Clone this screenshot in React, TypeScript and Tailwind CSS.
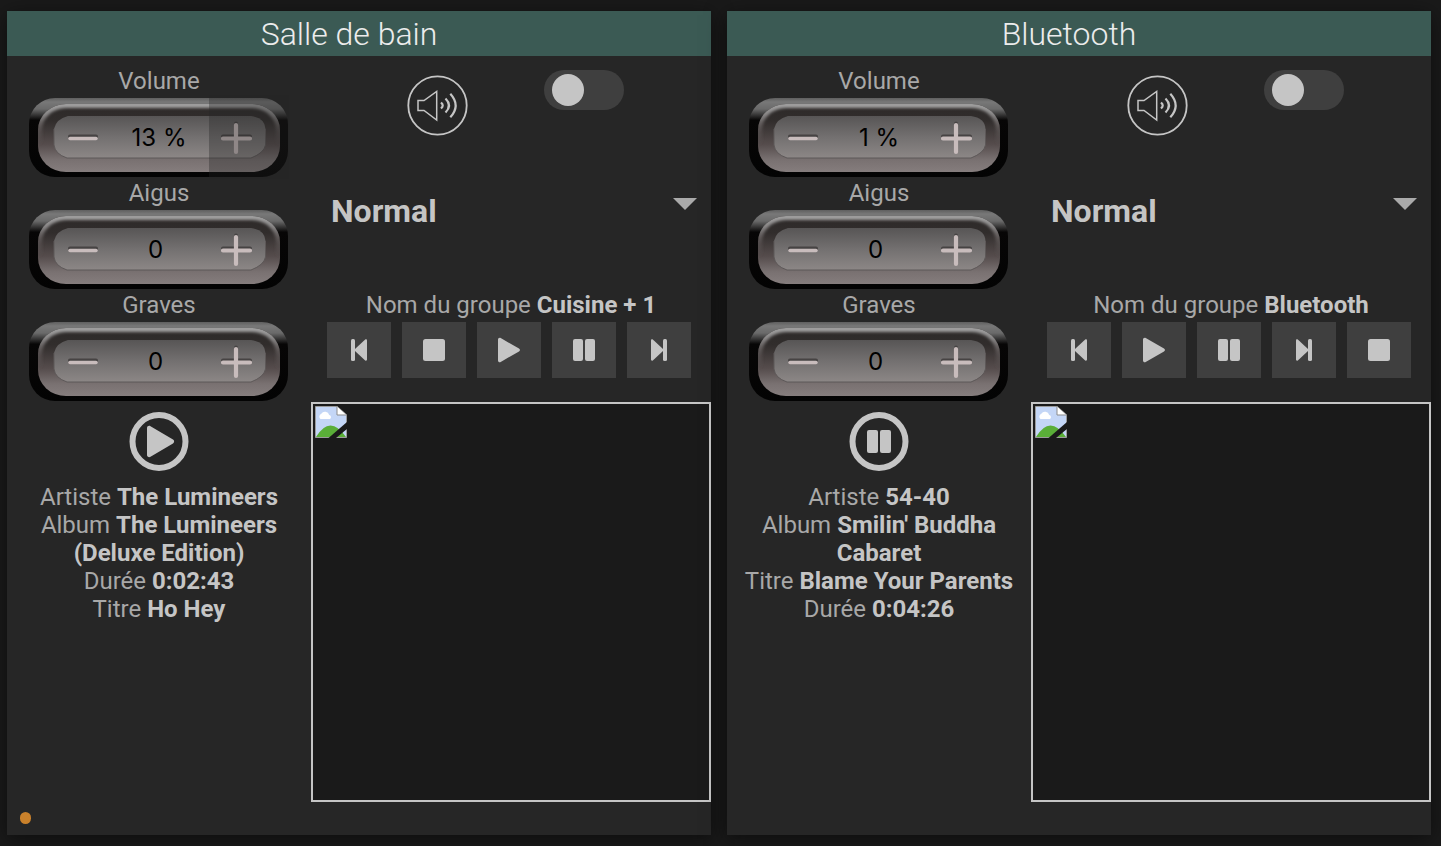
import { useState } from 'react';

type Status = 'play' | 'pause';
type Action = 'previous' | 'stop' | 'play' | 'pause' | 'next';

interface Info {
  label: string;
  value: string;
}

interface Room {
  id: string;
  name: string;
  volume: number;
  volumeLimit?: boolean;
  group: string;
  status: Status;
  actions: Action[];
  infos: Info[];
  pending?: boolean;
}

const ROOMS: Room[] = [
  {
    id: 'bath',
    name: 'Salle de bain',
    volume: 13,
    volumeLimit: true,
    group: 'Cuisine + 1',
    status: 'play',
    actions: ['previous', 'stop', 'play', 'pause', 'next'],
    infos: [
      { label: 'Artiste', value: 'The Lumineers' },
      { label: 'Album', value: 'The Lumineers (Deluxe Edition)' },
      { label: 'Durée', value: '0:02:43' },
      { label: 'Titre', value: 'Ho Hey' },
    ],
    pending: true,
  },
  {
    id: 'bluetooth',
    name: 'Bluetooth',
    volume: 1,
    group: 'Bluetooth',
    status: 'pause',
    actions: ['previous', 'play', 'pause', 'next', 'stop'],
    infos: [
      { label: 'Artiste', value: '54-40' },
      { label: 'Album', value: "Smilin' Buddha Cabaret" },
      { label: 'Titre', value: 'Blame Your Parents' },
      { label: 'Durée', value: '0:04:26' },
    ],
  },
];

const ACTION_ICON = {
  previous: (
    <>
      <rect x="24" y="17" width="4" height="22" rx="1.5" />
      <path d="M38.2 17.6 28 27v2l10.2 9.4c.8.7 1.8.3 1.8-.8V18.4c0-1.1-1-1.500-1.8-.8Z" />
    </>
  ),
  stop: <rect x="21" y="17" width="22" height="22" rx="2.5" />,
  play: (
    <path d="M21 17.6c0-1.4 1.5-2.2 2.7-1.5L42 26.5c1.3.7 1.3 2.3 0 3L23.7 39.9c-1.2.7-2.7-.1-2.7-1.5Z" />
  ),
  pause: (
    <>
      <rect x="21" y="17" width="10" height="22" rx="2" />
      <rect x="33" y="17" width="10" height="22" rx="2" />
    </>
  ),
  next: (
    <>
      <rect x="36" y="17" width="4" height="22" rx="1.5" />
      <path d="M25.8 17.6 36 27v2l-10.2 9.4c-.8.7-1.8.3-1.8-.8V18.4c0-1.1 1-1.5 1.8-.8Z" />
    </>
  ),
};

function StepperFrame({ id }: { id: string }) {
  return (
    <svg viewBox="0 0 260 84" className="absolute inset-0 h-full w-full" aria-hidden="true">
      <defs>
        <linearGradient id={`${id}-rim`} x1="0" y1="0" x2="0" y2="1">
          <stop offset="0" stopColor="#5f5f5f" />
          <stop offset="0.05" stopColor="#787878" />
          <stop offset="0.14" stopColor="#6a6a6a" />
          <stop offset="0.28" stopColor="#070606" />
          <stop offset="1" stopColor="#030303" />
        </linearGradient>
        <linearGradient id={`${id}-bevel`} x1="0" y1="0" x2="0" y2="1">
          <stop offset="0" stopColor="#2d2a29" />
          <stop offset="0.25" stopColor="#312d2c" />
          <stop offset="0.6" stopColor="#564d4d" />
          <stop offset="0.82" stopColor="#797171" />
          <stop offset="1" stopColor="#857d7d" />
        </linearGradient>
        <linearGradient id={`${id}-shine`} gradientUnits="userSpaceOnUse" x1="0" y1="9" x2="0" y2="77">
          <stop offset="0" stopColor="#a3a3a3" />
          <stop offset="0.15" stopColor="#8c8a8a" />
          <stop offset="0.4" stopColor="#6b6363" stopOpacity="0.4" />
          <stop offset="0.6" stopColor="#6b6363" stopOpacity="0" />
        </linearGradient>
        <linearGradient id={`${id}-plate`} x1="0" y1="0" x2="0" y2="1">
          <stop offset="0" stopColor="#575555" />
          <stop offset="0.5" stopColor="#737070" />
          <stop offset="1" stopColor="#8c8786" />
        </linearGradient>
        <filter id={`${id}-soft`} x="-5%" y="-10%" width="110%" height="120%">
          <feGaussianBlur stdDeviation="1.6" />
        </filter>
        <clipPath id={`${id}-clip`}>
          <rect x="9" y="9" width="242" height="68" rx="28" ry="26" />
        </clipPath>
      </defs>
      <rect x="0" y="3" width="259" height="79" rx="26" fill={`url(#${id}-rim)`} />
      <rect x="9" y="9" width="242" height="68" rx="28" ry="26" fill={`url(#${id}-bevel)`} />
      <g clipPath={`url(#${id}-clip)`}>
        <rect
          x="10"
          y="10"
          width="240"
          height="66"
          rx="27"
          ry="25"
          fill="none"
          stroke={`url(#${id}-shine)`}
          strokeWidth="6"
          filter={`url(#${id}-soft)`}
        />
      </g>
      <path
        d="M39 21H222Q236 23 236.5 34V50Q235 58 222 63H38Q26 59 25 50V34Q27 24 39 21Z"
        fill={`url(#${id}-plate)`}
      />
      <path
        d="M236.5 34V50Q235 58 222 63H38Q26 59 25 50V34"
        fill="none"
        stroke="#5d5858"
        strokeWidth="1"
      />
      <g fill="none" strokeLinecap="round">
        <path d="M41 41.5h26M194 41.500h27M207 28.500v7" stroke="#464343" strokeWidth="4" />
        <path d="M41 43.500h26" stroke="#c8bcbc" strokeWidth="3.500" />
        <path d="M194 43.500h27M207 30v27" stroke="#c8bcbc" strokeWidth="4.200" />
      </g>
    </svg>
  );
}

interface StepperProps {
  id: string;
  label: string;
  initial: number;
  unit?: string;
  limited?: boolean;
}

function Stepper({ id, label, initial, unit = '', limited }: StepperProps) {
  const [value, setValue] = useState(initial);

  return (
    <div role="group" aria-labelledby={id} className="flex w-full flex-col items-center">
      <span id={id}>{label}</span>
      <div className="relative flex h-[84px] w-[260px]">
        <StepperFrame id={`${id}-frame`} />
        <button
          type="button"
          aria-label={`${label} moins`}
          className="relative w-20"
          onClick={() => setValue(value - 1)}
        />
        <output className="relative flex-1 self-center pt-0.5 text-center font-['Inter',sans-serif] whitespace-pre text-black">
          {`${value} ${unit}`}
        </output>
        <button
          type="button"
          aria-label={`${label} plus`}
          className="relative w-20"
          onClick={() => setValue(value + 1)}
        />
        {limited && (
          <div className="pointer-events-none absolute inset-y-0 right-0 w-20 bg-[#262626]/35" />
        )}
      </div>
    </div>
  );
}

function StatusIcon({ status }: { status: Status }) {
  return (
    <svg viewBox="0 0 60 60" className="h-[60px] w-[60px] fill-[#c5c5c5]" aria-hidden="true">
      <circle cx="30" cy="30.5" r="26.5" fill="none" stroke="#c5c5c5" strokeWidth="6" />
      {status === 'play' ? (
        <path d="M18 17c0-1.8 2-2.7 3.5-1.8L44 28.6c1.5.9 1.5 2.9 0 3.8L21.5 45.8c-1.5.9-3.5 0-3.5-1.8Z" />
      ) : (
        <>
          <rect x="18" y="19" width="11" height="23" rx="2" />
          <rect x="31" y="19" width="11" height="23" rx="2" />
        </>
      )}
    </svg>
  );
}

function SpeakerIcon() {
  return (
    <svg
      viewBox="-31 -31 62 62"
      className="h-full w-full fill-none stroke-[#c5c5c5]"
      strokeWidth="1.8"
      aria-hidden="true"
    >
      <circle cx="-0.5" cy="-0.500" r="29.200" />
      <path d="M-20-5.500h6L-1.300-14.600v28.600L-14 4.500h-6Z" strokeWidth="1.500" />
      <path
        d="M3-3.500Q6.500-.5 3 2.500M7.500-7.500Q14.500-.5 7.500 6.500M12.300-12.300Q23-.5 12.300 11.300"
        strokeWidth="2.200"
      />
    </svg>
  );
}

function BrokenImage() {
  return (
    <svg viewBox="0 0 32 32" className="h-8 w-8" aria-hidden="true">
      <path d="M.5.5H22L31.500 9v22.500H.5Z" fill="#c4d6f6" stroke="#9b9b9b" />
      <path d="M5.500 13a3 3 0 0 1 .8-5.200A4.300 4.300 0 0 1 14.200 9a2.200 2.200 0 0 1 .8 4Z" fill="#fff" />
      <path d="M1 31Q8 19.500 15.500 19.500T31 31Z" fill="#5aae38" />
      <path d="M22 0v9h10Z" fill="#fff" stroke="#8b8b8b" />
      <path d="M22.600 0H32v8.500Z" fill="#1a1a1a" />
      <path d="M13.500 32 32 16v7L21 32Z" fill="#1a1a1a" />
    </svg>
  );
}

function PlayerTile({ room }: { room: Room }) {
  return (
    <section className="flex flex-col bg-[#262626] shadow-[0_4px_20px_rgba(0,0,0,0.5)]">
      <h2 className="h-[45px] bg-[#3b5a54] pr-5 text-center text-[32px]/[47px] font-light text-[#ececec]">
        {room.name}
      </h2>
      <div className="grid flex-1 grid-cols-[19fr_25fr]">
        <div className="flex flex-col items-center pt-[11px] text-center">
          <Stepper
            id={`${room.id}-volume`}
            label="Volume"
            initial={room.volume}
            unit="%"
            limited={room.volumeLimit}
          />
          <Stepper id={`${room.id}-treble`} label="Aigus" initial={0} />
          <Stepper id={`${room.id}-bass`} label="Graves" initial={0} />
          <div className="py-2">
            <StatusIcon status={room.status} />
          </div>
          <div className="w-full px-3 pt-1">
            {room.infos.map(({ label, value }) => (
              <p key={label}>
                {label} <strong className="font-bold text-[#c5c5c5]">{value}</strong>
              </p>
            ))}
          </div>
          {room.pending && (
            <span className="mt-auto mb-[11px] ml-[13px] h-3 w-[11px] self-start rounded-full bg-[#c9812b]" />
          )}
        </div>

        <div className="pb-[33px]">
          <div className="flex h-[127px] gap-[75px] pt-[14px] pl-24">
            <button type="button" aria-label="Muet" className="mt-[5px] h-[62px] w-[62px]">
              <SpeakerIcon />
            </button>
            <input
              type="checkbox"
              aria-label="Lecture aléatoire"
              className="h-10 w-20 appearance-none rounded-full bg-[#3f3f3f] p-1 pl-2 before:block before:h-8 before:w-8 before:rounded-full before:bg-[#c5c5c5] checked:before:translate-x-8"
            />
          </div>
          <div className="relative">
            <select
              aria-label="Mode de lecture"
              className="h-14 w-full appearance-none bg-transparent pl-5 text-[32px] font-bold text-[#c5c5c5]"
            >
              <option>Normal</option>
            </select>
            <svg
              viewBox="0 0 24 12"
              className="pointer-events-none absolute top-[15px] right-[14px] h-3 w-6 fill-[#aaaaaa]"
              aria-hidden="true"
            >
              <path d="M0 0h24L12 12Z" />
            </svg>
          </div>
          <p className="mt-[52px] text-center">
            Nom du groupe <strong className="font-bold text-[#c5c5c5]">{room.group}</strong>
          </p>
          <div className="mt-[3px] flex gap-[11px] pr-5 pl-4">
            {room.actions.map((action) => (
              <button key={action} type="button" aria-label={action} className="h-14 flex-1 bg-[#3f3f3f]">
                <svg viewBox="0 0 64 56" className="h-full w-full fill-[#c5c5c5]" aria-hidden="true">
                  {ACTION_ICON[action]}
                </svg>
              </button>
            ))}
          </div>
          <div className="mt-6 aspect-square w-full border-2 border-[#c5c5c5] bg-[#1a1a1a] p-0.5">
            <BrokenImage />
          </div>
        </div>
      </div>
    </section>
  );
}

function App() {
  return (
    <main className="grid min-h-screen grid-cols-2 content-start gap-4 bg-[#1a1a1a] pt-[11px] pr-[10px] pl-[7px] font-['Roboto',sans-serif] text-2xl/7 text-[#a8a8a8]">
      {ROOMS.map((room) => (
        <PlayerTile key={room.id} room={room} />
      ))}
    </main>
  );
}

export default App;
